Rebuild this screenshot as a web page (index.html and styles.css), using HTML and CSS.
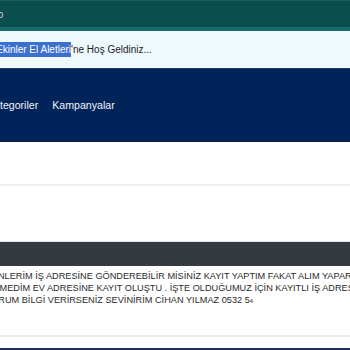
FILE: index.html
```html
<!DOCTYPE html>
<html lang="tr">
<head>
	<meta charset="UTF-8">
	<title>Ekinler El Aletleri</title>
	<link rel="stylesheet" href="styles.css">
</head>
<body>
	<div class="topbar">
		<span class="topLink">Video</span>
	</div>
	<div class="welcome">
		<span class="welcomeText"><span class="mark">Ekinler El Aletleri</span>'ne Hoş Geldiniz...</span>
	</div>
	<div class="nav">
		<ul class="menu">
			<li class="first">Kategoriler</li>
			<li>Kampanyalar</li>
		</ul>
	</div>
	<div class="search"></div>
	<div class="box">
		<div class="boxHead"></div>
		<div class="boxBody">
			<p class="line l1">ÜRÜNLERİM İŞ ADRESİNE GÖNDEREBİLİR MİSİNİZ KAYIT YAPTIM FAKAT ALIM YAPARKEN</p>
			<p class="line l2">DEĞİŞTİREMEDİM EV ADRESİNE KAYIT OLUŞTU . İŞTE OLDUĞUMUZ İÇİN KAYITLI İŞ ADRESİNE</p>
			<p class="line l3">GÖNDERİRSENİZ VEYA DURUM BİLGİ VERİRSENİZ SEVİNİRİM CİHAN YILMAZ 0532 5<span class="cut">4</span></p>
		</div>
	</div>
	<div class="footLine"></div>
</body>
</html>
```

FILE: styles.css
```css
* {
	margin: 0;
	padding: 0;
}
body {
	width: 350px;
	overflow: hidden;
	font-family: "Liberation Sans", Arial, sans-serif;
	background-color: #fff;
}
.topbar {
	height: 26px;
	background-color: #0b4e4e;
	border-top: 1px solid #17605f;
	border-bottom: 4px solid #1a6a6a;
	display: flex;
	align-items: center;
	overflow: hidden;
}
.topLink {
	margin-left: -22px;
	font-size: 10px;
	color: #cfd8d8;
	white-space: nowrap;
}
.welcome {
	height: 37px;
	background-color: #eef9fe;
	border-bottom: 1px solid #1e3d5c;
	display: flex;
	align-items: center;
	overflow: hidden;
}
.welcomeText {
	margin-left: -4px;
	font-size: 10px;
	color: #222;
	white-space: nowrap;
}
.mark {
	background-color: #3b6fd0;
	color: #fff;
	padding: 2px 0;
}
.nav {
	height: 71px;
	background-color: #00245a;
	border-bottom: 2px solid #0c2048;
	display: flex;
	align-items: center;
	overflow: hidden;
}
.menu {
	list-style: none;
	display: flex;
	gap: 14px;
	margin-left: -13px;
	font-size: 10.6px;
	color: #f2f4f8;
	white-space: nowrap;
}
.search {
	height: 42px;
	border-bottom: 2px solid #f0f0f0;
}
.box {
	margin-top: 55px;
	border-top: 1px solid #dfe2e5;
}
.boxHead {
	height: 24px;
	background-color: #343a40;
}
.boxBody {
	padding: 4px 0 28px;
	border-bottom: 2px solid #eeeeee;
	overflow: hidden;
}
.line {
	font-size: 9.2px;
	line-height: 12px;
	color: #2b2b2b;
	white-space: nowrap;
}
.l1 {
	margin-left: -22px;
}
.l2 {
	margin-left: -50px;
}
.l3 {
	margin-left: -120px;
}
.cut {
	font-size: 6px;
}
.footLine {
	margin-top: 11px;
	height: 3px;
	background-color: #1c2f57;
}
```
